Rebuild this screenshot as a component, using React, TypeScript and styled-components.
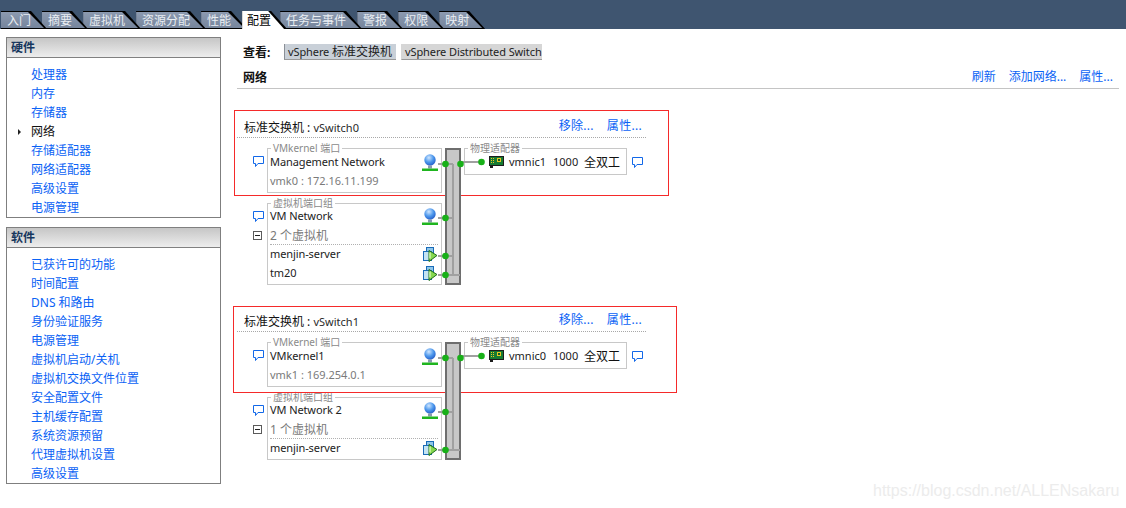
import React from "react";
import styled, { createGlobalStyle } from "styled-components";

const Global = createGlobalStyle`
  html, body { margin: 0; padding: 0; background: #fff; }
  body { font-family: "Noto Sans", "Noto Sans CJK SC", sans-serif; font-size: 12px; color: #111; }
`;

const Page = styled.div`
  position: relative;
  width: 1126px;
  height: 508px;
  overflow: hidden;
  background: #fff;
`;
const Top = styled.div`
  position: relative;
  height: 29px;
  background: #3f5570;
  box-sizing: border-box;
  padding: 11px 0 0 1px;
  display: flex;
  align-items: stretch;
  overflow: hidden;
`;
const Tab = styled.div<{ $active?: boolean; $z: number }>`
  position: relative;
  z-index: ${(p) => (p.$active ? 50 : p.$z)};
  height: 18px;
  box-sizing: border-box;
  padding: 2px 16px 0 ${(p) => (p.$active ? 5 : 6)}px;
  margin-right: ${(p) => (p.$active ? -7 : -5)}px;
  background: #000;
  clip-path: polygon(0 0, calc(100% - 16px) 0, 100% 100%, 0 100%);
  color: ${(p) => (p.$active ? "#000" : "#e9edf2")};
  font-size: 12px;
  line-height: 15px;
  white-space: nowrap;
  span { position: relative; }
  &::before {
    content: "";
    position: absolute;
    inset: ${(p) => (p.$active ? "0 0 0 0" : "1px 0 1px 0")};
    background: ${(p) => (p.$active ? "#fff" : "linear-gradient(#8c9ab0, #76859c)")};
    clip-path: polygon(0 0, calc(100% - 19px) 0, calc(100% - 3px) 100%, 0 100%);
  }
`;
const Body = styled.div`
  display: flex;
  align-items: flex-start;
`;
const Side = styled.div`
  width: 215px;
  margin: 8px 0 0 6px;
  display: flex;
  flex-direction: column;
  gap: 9px;
  flex: none;
`;
const Panel = styled.div`
  border: 1px solid #7f7f7f;
`;
const PanelHead = styled.div`
  height: 20px;
  box-sizing: border-box;
  padding-left: 4px;
  background: linear-gradient(#c6c6c6, #ededed);
  border-bottom: 1px solid #808080;
  font-weight: 700;
  font-size: 12px;
  line-height: 20px;
  color: #17375e;
`;
const PanelList = styled.div`
  padding: 7px 0 0 0;
`;
const NavRow = styled.div<{ $current?: boolean }>`
  position: relative;
  height: 19px;
  padding-left: 24px;
  font-size: 12px;
  line-height: 19px;
  color: ${(p) => (p.$current ? "#111" : "#0a62f5")};
`;
const Caret = styled.i`
  position: absolute;
  left: 11px;
  top: 7px;
  width: 0;
  height: 0;
  border-left: 3px solid #222;
  border-top: 3px solid transparent;
  border-bottom: 3px solid transparent;
`;
const Main = styled.div`
  margin: 15px 0 0 16px;
  width: 882px;
  flex: none;
`;
const ViewRow = styled.div`
  display: flex;
  align-items: center;
  height: 16px;
  padding-left: 6px;
`;
const ViewLabel = styled.b`
  width: 41px;
  font-size: 12px;
`;
const ViewButton = styled.div<{ $on?: boolean; $w: number }>`
  width: ${(p) => p.$w}px;
  height: 16px;
  box-sizing: border-box;
  margin-right: 5px;
  padding: 0 0 0 3px;
  line-height: 15px;
  font-size: 11px;
  letter-spacing: -0.1px;
  color: #222;
  white-space: nowrap;
  background: ${(p) => (p.$on ? "#c9d0d8" : "#d6d6d6")};
  border-left: 1px solid ${(p) => (p.$on ? "#8a8f96" : "#d6d6d6")};
  border-bottom: 1px solid #9a9a9a;
  span { font-size: 12px; letter-spacing: 0; }
`;
const TitleBar = styled.div`
  display: flex;
  justify-content: space-between;
  align-items: center;
  height: 29px;
  box-sizing: border-box;
  padding: 6px 6px 0 6px;
  border-bottom: 1px solid #c4c4c4;
`;
const TitleText = styled.b`
  font-size: 12px;
  color: #111;
`;
const TitleLinks = styled.div`
  display: flex;
  gap: 13px;
  margin-top: -2px;
`;
const Link = styled.span`
  color: #0a62f5;
  font-size: 12px;
  white-space: nowrap;
`;
const Section = styled.section<{ $gap: number }>`
  position: relative;
  width: 440px;
  margin-top: ${(p) => p.$gap}px;
`;
const RedBox = styled.div<{ $l: number; $t: number; $w: number; $h: number }>`
  position: absolute;
  left: ${(p) => p.$l}px;
  top: ${(p) => p.$t}px;
  width: ${(p) => p.$w}px;
  height: ${(p) => p.$h}px;
  box-sizing: border-box;
  border: 1px solid #f52a2a;
  pointer-events: none;
`;
const SwitchHead = styled.div`
  width: 409px;
  height: 21px;
  box-sizing: border-box;
  padding: 2px 4px 0 7px;
  display: flex;
  justify-content: space-between;
  border-bottom: 1px dotted #a8a8a8;
`;
const SwitchTitle = styled.div`
  font-size: 12px;
  line-height: 18px;
  white-space: nowrap;
  small { font-size: 11px; color: #2a2a2a; }
`;
const SwitchLinks = styled.div`
  display: flex;
  gap: 13px;
  margin-top: -3px;
  letter-spacing: 0.3px;
`;
const Diagram = styled.div`
  display: flex;
  align-items: flex-start;
  margin-top: 10px;
`;
const Groups = styled.div`
  width: 205px;
  display: flex;
  flex-direction: column;
  gap: 10px;
  flex: none;
`;
const GroupRow = styled.div`
  display: flex;
`;
const Notes = styled.div`
  width: 30px;
  flex: none;
  padding: 4px 0 0 16px;
  box-sizing: border-box;
  display: flex;
  flex-direction: column;
`;
const NoteCell = styled.div`
  height: 19px;
  display: flex;
  align-items: center;
`;
const Fieldset = styled.div<{ $top: number; $bottom: number }>`
  position: relative;
  flex: 1;
  box-sizing: border-box;
  border: 1px solid #c8c8c8;
  padding: ${(p) => p.$top}px 3px ${(p) => p.$bottom}px 2px;
`;
const Legend = styled.div`
  position: absolute;
  left: 3px;
  top: -7px;
  padding: 0 2px;
  background: #fff;
  font-size: 10px;
  line-height: 12px;
  color: #8a8a8a;
  white-space: nowrap;
`;
const Row = styled.div`
  height: 19px;
  display: flex;
  align-items: center;
  justify-content: space-between;
  font-size: 11px;
  letter-spacing: -0.1px;
  color: #222;
  white-space: nowrap;
`;
const Muted = styled.span`
  color: #7a7a7a;
  font-size: 11px;
  letter-spacing: 0;
`;
const Count = styled(Muted)`
  font-size: 12px;
`;
const Dots = styled.div`
  border-top: 1px dotted #b0b0b0;
  margin-bottom: -1px;
`;
const IconSlot = styled.span<{ $nudge: number }>`
  display: block;
  flex: none;
  margin-top: ${(p) => p.$nudge}px;
`;
const BarArt = styled.svg`
  display: block;
  flex: none;
  margin-left: -6px;
  position: relative;
  z-index: 2;
`;
const Adapter = styled.div`
  position: relative;
  flex: none;
  width: 163px;
  height: 27px;
  box-sizing: border-box;
  border: 1px solid #c8c8c8;
  display: flex;
  align-items: center;
  font-size: 11px;
  color: #222;
  white-space: nowrap;
`;
const WireArt = styled.svg`
  margin-left: -4px;
  margin-right: 3px;
  flex: none;
`;
const NicName = styled.span`
  margin-left: 5px;
  width: 44px;
  flex: none;
`;
const Speed = styled.span`
  width: 31px;
  flex: none;
`;
const Duplex = styled.span`
  font-size: 12px;
  color: #111;
`;
const AdapterNote = styled.div`
  margin: 9px 0 0 5px;
`;
const Watermark = styled.div`
  position: absolute;
  left: 873px;
  top: 482px;
  font-family: "Liberation Sans", sans-serif;
  font-size: 16px;
  line-height: 18px;
  color: #ececec;
  white-space: nowrap;
`;

const Bubble = () => (
  <svg width="11" height="11" viewBox="0 0 11 11" style={{ display: "block" }}>
    <path d="M.5.5h10v7H5L2.5 10.5v-3h-2z" fill="#fff" stroke="#1268e8" strokeWidth="1" />
  </svg>
);
const Minus = () => (
  <svg width="9" height="9" viewBox="0 0 9 9" style={{ display: "block" }}>
    <rect x=".5" y=".5" width="8" height="8" fill="#fff" stroke="#5a5a5a" />
    <path d="M2 4.5h5" stroke="#222" />
  </svg>
);
const Globe = ({ id }: { id: string }) => (
  <IconSlot $nudge={2}>
    <svg width="16" height="17" viewBox="0 0 16 17" style={{ display: "block" }}>
      <defs>
        <radialGradient id={id} cx="0.4" cy="0.3" r="0.8">
          <stop offset="0" stopColor="#cfe6ff" />
          <stop offset="0.5" stopColor="#4c97ec" />
          <stop offset="1" stopColor="#1a4fc0" />
        </radialGradient>
      </defs>
      <circle cx="8" cy="6" r="5.7" fill={`url(#${id})`} />
      <path d="M6 11.5h4v3H6z" fill="#8a9ab0" />
      <path d="M0 14.5h16v2.5H0z" fill="#1fb51f" />
    </svg>
  </IconSlot>
);
const VmIcon = () => (
  <IconSlot $nudge={2}>
    <svg width="15" height="15" viewBox="0 0 15 15" style={{ display: "block" }}>
      <rect x="3.5" y=".5" width="7" height="7" fill="#8fc6ea" stroke="#1a6bb8" />
      <rect x=".5" y="4.5" width="8" height="9" fill="#c4e3f3" stroke="#1a6bb8" />
      <path d="M6 3.5l8 5-8 6z" fill="#86d84e" stroke="#1d6e1d" strokeWidth="1" />
      <path d="M7 5.5v6" stroke="#d2f4b2" strokeWidth="1.5" />
    </svg>
  </IconSlot>
);
const Nic = () => (
  <svg width="16" height="12" viewBox="0 0 16 12" style={{ flex: "none", display: "block" }}>
    <path d="M1 0h15v10H5v2H2v-2H1z" fill="#1c1c1c" />
    <rect x="2" y="1" width="13" height="8" fill="#167a32" />
    <path d="M3 2h1v1H3zM5 2h1v1H5zM3 4h1v1H3zM5 4h1v1H5zM3 6h1v1H3zM5 6h1v1H5z" fill="#f0c820" />
    <rect x="9.5" y="2.5" width="3" height="3" fill="#0e5a25" stroke="#e8c820" strokeWidth="1" />
  </svg>
);

const SwitchBar = ({ height, wires }: { height: number; wires: number[] }) => {
  const last = wires[wires.length - 1];
  return (
    <BarArt width="28" height={height} viewBox={`0 0 28 ${height}`}>
      <rect x="10" y="1" width="14" height={height - 2} fill="#c8c8c8" stroke="#6e6e6e" strokeWidth="2" />
      <path d={`M17 ${wires[0]}V${last}`} stroke="#a0a0a0" strokeWidth="2" fill="none" />
      {wires.map((y, i) => (
        <g key={y}>
          <path d={`M2 ${y}H${i === wires.length - 1 ? 24 : 17}`} stroke="#a0a0a0" strokeWidth="2" />
          <circle cx="9.5" cy={y} r="3.3" fill="#18b018" />
        </g>
      ))}
      <circle cx="24.5" cy={wires[0]} r="3.3" fill="#18b018" />
    </BarArt>
  );
};

type Port = { name: string; detail: string };
type SwitchProps = {
  name: string;
  gap: number;
  nic: string;
  port: Port;
  network: string;
  count: string;
  vms: string[];
  wires: number[];
  height: number;
  red: { l: number; t: number; w: number; h: number };
};

const Switch = ({ name, gap, nic, port, network, count, vms, wires, height, red }: SwitchProps) => (
  <Section $gap={gap}>
    <SwitchHead>
      <SwitchTitle>
        标准交换机 : <small>{name}</small>
      </SwitchTitle>
      <SwitchLinks>
        <Link>移除...</Link>
        <Link>属性...</Link>
      </SwitchLinks>
    </SwitchHead>
    <Diagram>
      <Groups>
        <GroupRow>
          <Notes>
            <NoteCell><Bubble /></NoteCell>
          </Notes>
          <Fieldset $top={3} $bottom={2}>
            <Legend>VMkernel 端口</Legend>
            <Row>{port.name}<Globe id={`${name}-a`} /></Row>
            <Row><Muted>{port.detail}</Muted></Row>
          </Fieldset>
        </GroupRow>
        <GroupRow>
          <Notes>
            <NoteCell><Bubble /></NoteCell>
            <NoteCell><Minus /></NoteCell>
          </Notes>
          <Fieldset $top={2} $bottom={2}>
            <Legend>虚拟机端口组</Legend>
            <Row>{network}<Globe id={`${name}-b`} /></Row>
            <Row><Count>{count}</Count></Row>
            <Dots />
            {vms.map((vm) => (
              <Row key={vm}>{vm}<VmIcon /></Row>
            ))}
          </Fieldset>
        </GroupRow>
      </Groups>
      <SwitchBar height={height} wires={wires} />
      <Adapter>
        <Legend>物理适配器</Legend>
        <WireArt width="24" height="12" viewBox="0 0 24 12">
          <path d="M0 6H20" stroke="#a0a0a0" strokeWidth="2" />
          <circle cx="20.5" cy="6" r="3.3" fill="#18b018" />
        </WireArt>
        <Nic />
        <NicName>{nic}</NicName>
        <Speed>1000</Speed>
        <Duplex>全双工</Duplex>
      </Adapter>
      <AdapterNote><Bubble /></AdapterNote>
    </Diagram>
    <RedBox $l={red.l} $t={red.t} $w={red.w} $h={red.h} />
  </Section>
);

const tabs = ["入门", "摘要", "虚拟机", "资源分配", "性能", "配置", "任务与事件", "警报", "权限", "映射"];
const hardware = ["处理器", "内存", "存储器", "网络", "存储适配器", "网络适配器", "高级设置", "电源管理"];
const software = [
  "已获许可的功能", "时间配置", "DNS 和路由", "身份验证服务", "电源管理", "虚拟机启动/关机",
  "虚拟机交换文件位置", "安全配置文件", "主机缓存配置", "系统资源预留", "代理虚拟机设置", "高级设置",
];

export default function App() {
  return (
    <Page>
      <Global />
      <Top>
        {tabs.map((t, i) => (
          <Tab key={t} $z={20 - i} $active={t === "配置"}><span>{t}</span></Tab>
        ))}
      </Top>
      <Body>
        <Side>
          <Panel>
            <PanelHead>硬件</PanelHead>
            <PanelList>
              {hardware.map((h) => (
                <NavRow key={h} $current={h === "网络"}>
                  {h === "网络" && <Caret />}
                  {h}
                </NavRow>
              ))}
            </PanelList>
          </Panel>
          <Panel>
            <PanelHead>软件</PanelHead>
            <PanelList>
              {software.map((s) => (
                <NavRow key={s}>{s}</NavRow>
              ))}
            </PanelList>
          </Panel>
        </Side>
        <Main>
          <ViewRow>
            <ViewLabel>查看:</ViewLabel>
            <ViewButton $on $w={112}>vSphere <span>标准交换机</span></ViewButton>
            <ViewButton $w={141}>vSphere Distributed Switch</ViewButton>
          </ViewRow>
          <TitleBar>
            <TitleText>网络</TitleText>
            <TitleLinks>
              <Link>刷新</Link>
              <Link>添加网络...</Link>
              <Link>属性...</Link>
            </TitleLinks>
          </TitleBar>
          <Switch
            name="vSwitch0" gap={28} nic="vmnic1"
            port={{ name: "Management Network", detail: "vmk0 : 172.16.11.199" }}
            network="VM Network" count="2 个虚拟机" vms={["menjin-server", "tm20"]}
            wires={[16, 70, 108, 127]} height={137}
            red={{ l: -3, t: -7, w: 435, h: 86 }}
          />
          <Switch
            name="vSwitch1" gap={26} nic="vmnic0"
            port={{ name: "VMkernel1", detail: "vmk1 : 169.254.0.1" }}
            network="VM Network 2" count="1 个虚拟机" vms={["menjin-server"]}
            wires={[16, 70, 108]} height={118}
            red={{ l: -4, t: -5, w: 444, h: 87 }}
          />
        </Main>
      </Body>
      <Watermark>https://blog.csdn.net/ALLENsakaru</Watermark>
    </Page>
  );
}
